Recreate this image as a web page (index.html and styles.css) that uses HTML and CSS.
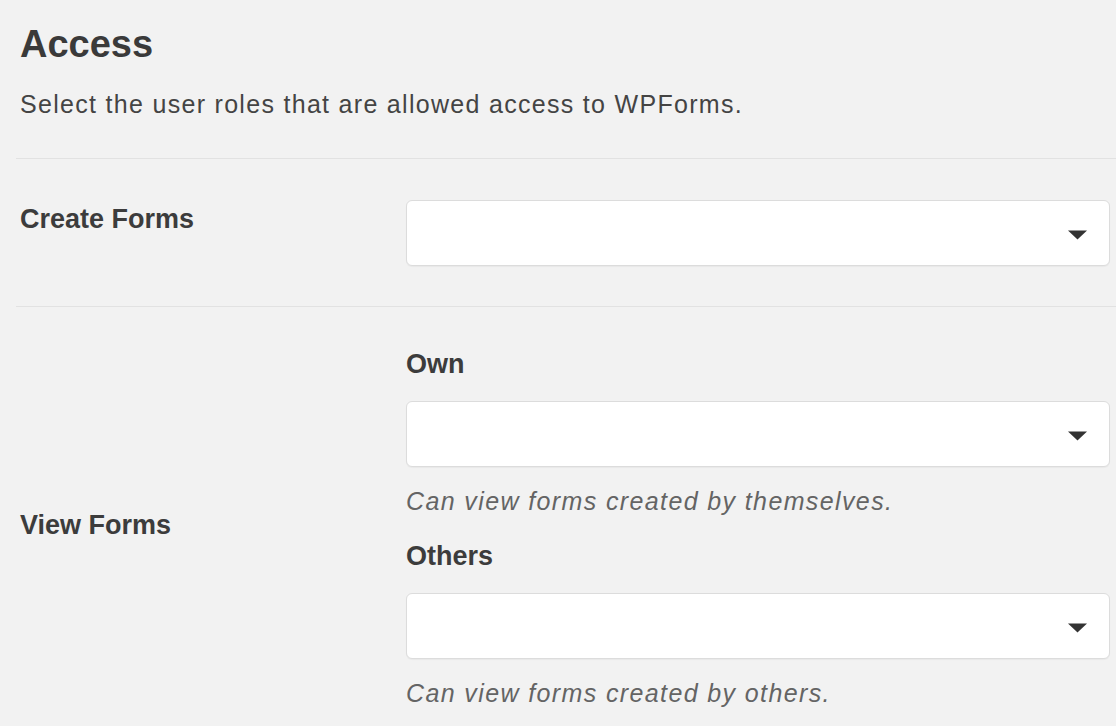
FILE: index.html
```html
<!DOCTYPE html>
<html lang="en">
<head>
<meta charset="utf-8">
<title>Access</title>
<link rel="stylesheet" href="styles.css">
</head>
<body>
<div class="page">
  <h2 class="title">Access</h2>
  <p class="intro">Select the user roles that are allowed access to WPForms.</p>

  <div class="row row-create">
    <div class="th">Create Forms</div>
    <div class="td">
      <div class="select">
        <svg class="caret" width="19" height="10" viewBox="0 0 19 10"><path d="M0 0.5 H19 L9.5 9.5 Z" fill="#333"/></svg>
      </div>
    </div>
  </div>

  <div class="row row-view">
    <div class="th th-middle">View Forms</div>
    <div class="td">
      <div class="sublabel">Own</div>
      <div class="select">
        <svg class="caret" width="19" height="10" viewBox="0 0 19 10"><path d="M0 0.5 H19 L9.5 9.5 Z" fill="#333"/></svg>
      </div>
      <p class="desc">Can view forms created by themselves.</p>
      <div class="sublabel sublabel-next">Others</div>
      <div class="select">
        <svg class="caret" width="19" height="10" viewBox="0 0 19 10"><path d="M0 0.5 H19 L9.5 9.5 Z" fill="#333"/></svg>
      </div>
      <p class="desc">Can view forms created by others.</p>
    </div>
  </div>
</div>
</body>
</html>
```

FILE: styles.css
```css
html, body {
  margin: 0;
  padding: 0;
  background: #f2f2f2;
}

body {
  font-family: "Liberation Sans", Arial, Helvetica, sans-serif;
  color: #3c3c3c;
}

.page {
  padding-left: 20px;
}

.title {
  margin: 0;
  padding-top: 22px;
  font-size: 38px;
  line-height: 44px;
  font-weight: 700;
  color: #3a3a3a;
}

.intro {
  margin: 20px 0 36px;
  font-size: 25px;
  line-height: 36px;
  letter-spacing: 1.3px;
  color: #444;
}

.row {
  display: grid;
  grid-template-columns: 386px 1fr;
  border-top: 1px solid #e2e2e2;
  margin-left: -4px;
  padding-left: 4px;
}

.th {
  font-size: 27px;
  line-height: 32px;
  font-weight: 700;
  color: #3c3c3c;
  padding-top: 44px;
}

.th-middle {
  padding-top: 0;
  align-self: center;
}

.td {
  padding: 41px 6px 40px 0;
}

.row-view .td {
  padding-bottom: 31px;
}

.select {
  height: 64px;
  background: #fff;
  border: 1px solid #dcdcdc;
  border-radius: 6px;
  box-shadow: 0 1px 1px rgba(0, 0, 0, 0.04);
  display: flex;
  align-items: center;
  justify-content: flex-end;
  padding-right: 22px;
}

.caret {
  display: block;
  margin-top: 3px;
}

.sublabel {
  font-size: 27px;
  line-height: 32px;
  font-weight: 700;
  color: #3c3c3c;
  margin-bottom: 21px;
}

.sublabel-next {
  margin-top: 21px;
}

.desc {
  margin: 16px 0 0;
  font-size: 25px;
  line-height: 36px;
  font-style: italic;
  letter-spacing: 1.38px;
  color: #646464;
}
```
